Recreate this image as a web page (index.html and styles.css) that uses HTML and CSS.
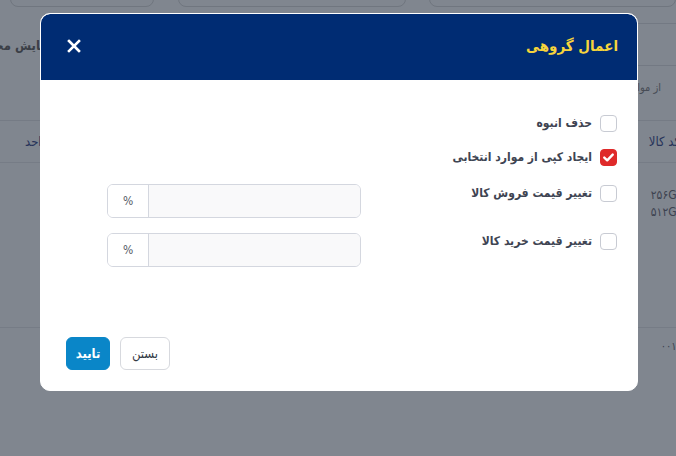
FILE: index.html
```html
<!DOCTYPE html>
<html lang="fa">
<head>
<meta charset="utf-8">
<title>اعمال گروهی</title>
<link rel="stylesheet" href="styles.css">
</head>
<body>
<div class="page">
  <div class="filters">
    <div class="fbox fbox-a"></div>
    <div class="fbox fbox-b"></div>
    <div class="fbox fbox-c"></div>
  </div>
  <div class="toolbar">
    <div class="tb-left">نمایش محصولات</div>
    <div class="tb-right">
      <div class="tb-line"></div>
      <div class="tb-line tb-line2"></div>
      <div class="tb-text">از موارد</div>
    </div>
  </div>
  <div class="table">
    <div class="thead">
      <span class="th-left">واحد</span>
      <span class="th-right">کد کالا</span>
    </div>
    <div class="trow trow-tall">
      <div class="cell-right">۲۵۶GB<br>۵۱۲GB</div>
    </div>
    <div class="trow">
      <div class="cell-right small">۰۰۱۲</div>
    </div>
  </div>
</div>

<div class="modal" dir="rtl">
  <div class="modal-header">
    <h2 class="modal-title">اعمال گروهی</h2>
    <button class="close" aria-label="close">
      <svg width="14" height="14" viewBox="0 0 14 14"><path d="M2 2 L12 12 M12 2 L2 12" stroke="#fff" stroke-width="2.6" stroke-linecap="square"/></svg>
    </button>
  </div>
  <div class="modal-body">
    <div class="row row-1">
      <label class="check"><span class="box"></span><span class="label">حذف انبوه</span></label>
    </div>
    <div class="row row-2">
      <label class="check"><span class="box checked"><svg width="11" height="9" viewBox="0 0 11 9"><path d="M1.3 4.6 L4.2 7.3 L9.7 1.6" fill="none" stroke="#fff" stroke-width="2.4" stroke-linecap="round" stroke-linejoin="round"/></svg></span><span class="label">ایجاد کپی از موارد انتخابی</span></label>
    </div>
    <div class="row row-3">
      <label class="check"><span class="box"></span><span class="label">تغییر قیمت فروش کالا</span></label>
      <div class="igroup"><span class="field"></span><span class="addon">%</span></div>
    </div>
    <div class="row row-4">
      <label class="check"><span class="box"></span><span class="label">تغییر قیمت خرید کالا</span></label>
      <div class="igroup"><span class="field"></span><span class="addon">%</span></div>
    </div>
  </div>
  <div class="modal-footer">
    <button class="btn btn-close">بستن</button>
    <button class="btn btn-ok">تایید</button>
  </div>
</div>
</body>
</html>
```
FILE: styles.css
```css
html, body {
  margin: 0;
  padding: 0;
}
body {
  width: 676px;
  height: 456px;
  overflow: hidden;
  background: #80868f;
  font-family: "DejaVu Sans", "Noto Sans", sans-serif;
  font-stretch: condensed;
  position: relative;
}

/* background page (dimmed) */
.page {
  width: 676px;
  height: 456px;
  overflow: hidden;
  color: #3a4253;
}
.filters {
  display: flex;
  height: 7px;
  padding-left: 10px;
}
.fbox {
  height: 40px;
  margin-top: -33px;
  border: 1px solid #70767f;
  border-radius: 8px;
  box-sizing: border-box;
}
.fbox-a { width: 151px; }
.fbox-b { width: 240px; margin-left: 24px; }
.fbox-c { width: 260px; margin-left: 23px; }

.toolbar {
  display: flex;
  justify-content: space-between;
  height: 113px;
}
.tb-left {
  direction: rtl;
  font-size: 13px;
  font-weight: bold;
  color: #3b3f47;
  margin-left: -44px;
  margin-top: 31px;
  white-space: nowrap;
}
.tb-right {
  width: 40px;
}
.tb-line {
  height: 16px;
  border-bottom: 1px solid #737983;
}
.tb-line2 {
  height: 41px;
}
.tb-text {
  direction: rtl;
  font-size: 11px;
  color: #474c55;
  margin-top: 15px;
  white-space: nowrap;
  width: 60px;
  margin-left: -8px;
  text-align: left;
}

.table {
  border-top: 1px solid #757b85;
}
.thead {
  height: 41px;
  display: flex;
  justify-content: space-between;
  align-items: center;
  border-bottom: 1px solid #767c86;
  font-size: 13px;
  color: #27345a;
}
.th-left {
  direction: rtl;
  margin-left: 25px;
}
.th-right {
  direction: rtl;
  margin-right: -4px;
}
.trow {
  height: 164px;
  border-bottom: 1px solid #767c86;
  display: flex;
  justify-content: flex-end;
}
.cell-right {
  direction: rtl;
  font-size: 12px;
  line-height: 17px;
  color: #3d4250;
  margin-top: 24px;
  margin-right: -8px;
  text-align: right;
}
.cell-right.small {
  margin-top: 10px;
  font-size: 11px;
  margin-right: -6px;
}

/* modal (overlay) */
.modal {
  position: absolute;
  left: 40px;
  top: 13px;
  width: 598px;
  height: 378px;
  box-sizing: border-box;
  background: #fff;
  border: 1px solid #fff;
  border-radius: 10px;
  display: flex;
  flex-direction: column;
  overflow: hidden;
}
.modal-header {
  height: 66px;
  background: #002c73;
  border-radius: 9px 9px 0 0;
  display: flex;
  align-items: center;
  justify-content: space-between;
  padding: 0 19px 0 26px;
  flex-shrink: 0;
}
.modal-title {
  margin: 0;
  font-size: 15px;
  font-weight: bold;
  color: #f6d43c;
  padding-bottom: 3px;
}
.close {
  background: none;
  border: 0;
  padding: 0;
  width: 14px;
  height: 14px;
  display: flex;
  cursor: pointer;
  margin-bottom: 2px;
}

.modal-body {
  flex: 1;
  padding: 35px 20px 0 66px;
}
.row {
  display: flex;
  justify-content: space-between;
  align-items: flex-start;
}
.row-1 { height: 34px; }
.row-2 { height: 35px; }
.row-3 { height: 49px; }
.row-3 .check { margin-top: 1px; }
.check {
  display: flex;
  align-items: center;
  gap: 8px;
}
.box {
  width: 17px;
  height: 17px;
  box-sizing: border-box;
  border: 1px solid #c8cbd3;
  border-radius: 4px;
  background: #fff;
  display: flex;
  align-items: center;
  justify-content: center;
}
.box.checked {
  background: #df2a2a;
  border-color: #df2a2a;
}
.label {
  font-size: 12px;
  font-weight: bold;
  color: #3e4452;
  line-height: 17px;
}
.igroup {
  width: 254px;
  height: 34px;
  display: flex;
  box-sizing: border-box;
  border: 1px solid #d4d7df;
  border-radius: 6px;
  overflow: hidden;
}
.field {
  flex: 1;
  background: #f9f9fa;
}
.addon {
  width: 40px;
  border-right: 1px solid #d4d7df;
  background: #fff;
  display: flex;
  align-items: center;
  justify-content: center;
  font-size: 12px;
  color: #555b66;
}

.modal-footer {
  display: flex;
  justify-content: flex-start;
  direction: ltr;
  gap: 10px;
  padding: 0 25px 20px 25px;
}
.btn {
  height: 33px;
  border-radius: 6px;
  font-family: "DejaVu Sans", sans-serif;
  font-stretch: condensed;
  font-size: 13px;
  padding: 0;
  box-sizing: border-box;
}
.btn-ok {
  order: 1;
  width: 44px;
  background: #0a86c8;
  border: 1px solid #0a86c8;
  color: #fff;
  font-weight: bold;
}
.btn-close {
  order: 2;
  width: 50px;
  background: #fff;
  border: 1px solid #d7d9de;
  color: #333a45;
}
```
